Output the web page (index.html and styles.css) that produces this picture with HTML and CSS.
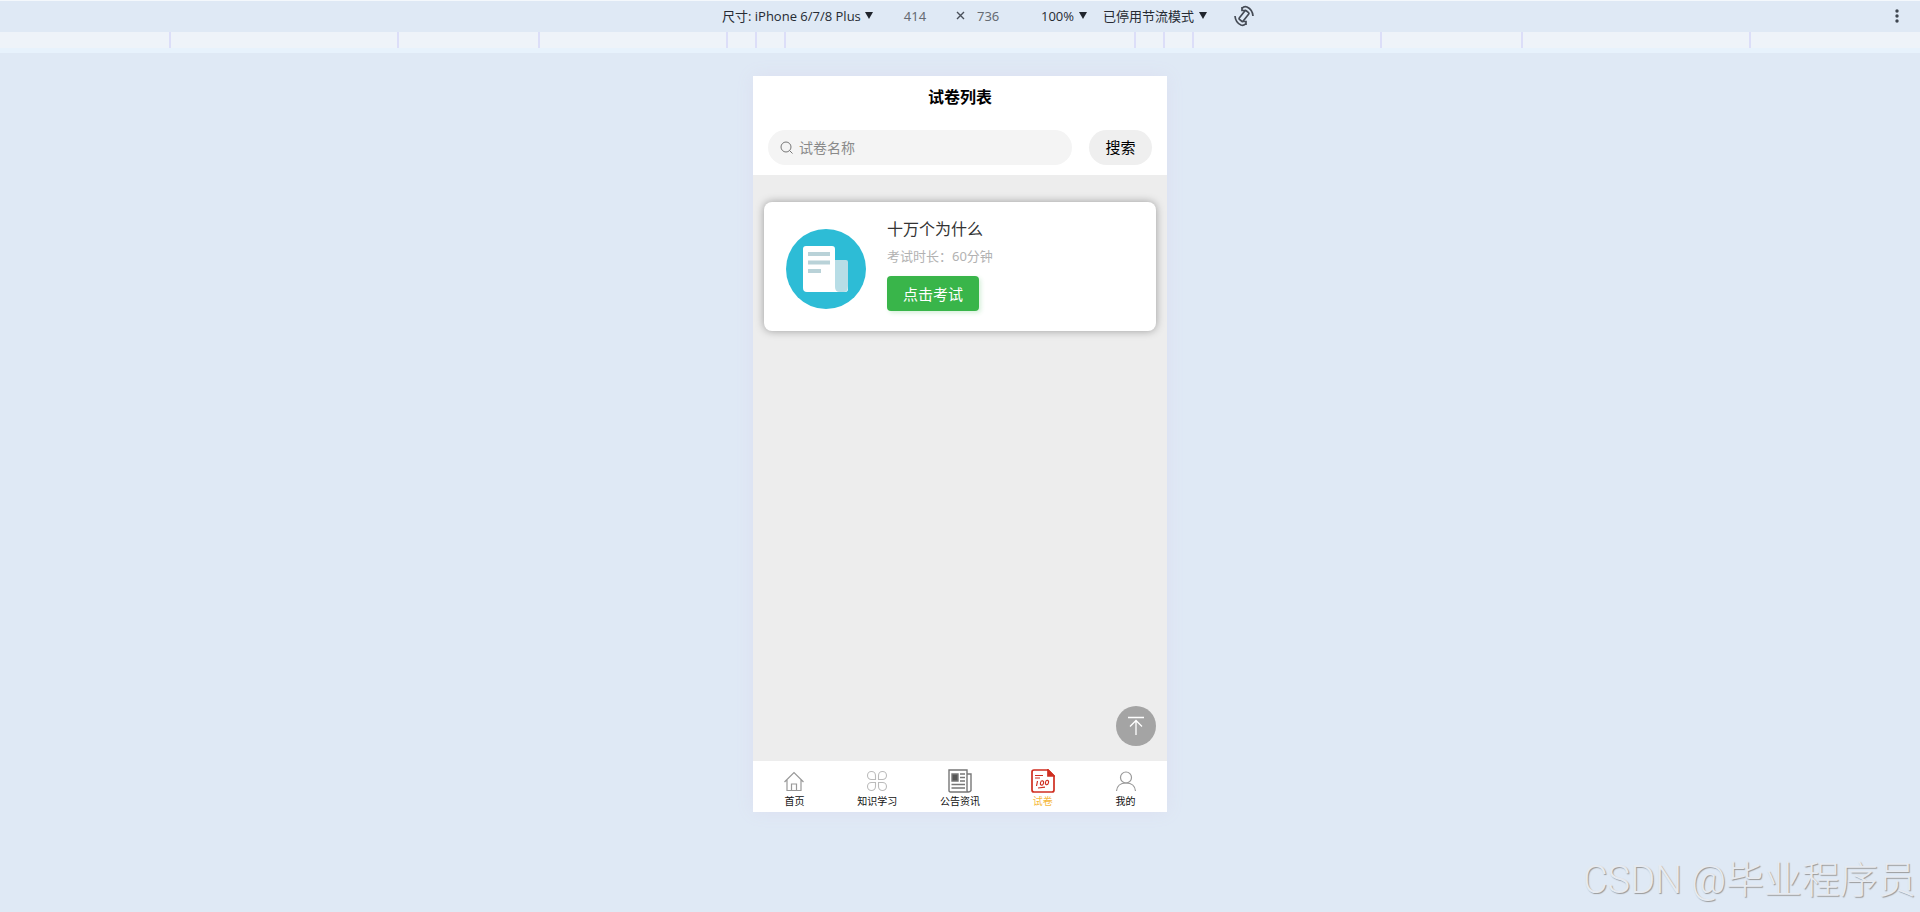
FILE: index.html
```html
<!DOCTYPE html>
<html lang="zh-CN">
<head>
  <meta charset="UTF-8">
  <meta name="viewport" content="width=device-width, initial-scale=1.0">
  <title>试卷列表</title>
  <link rel="stylesheet" href="styles.css">
</head>
<body>

<header class="toolbar">
  <div class="toolbar-left">
    <label class="picker">
      <select aria-label="尺寸"><option>尺寸: iPhone 6/7/8 Plus</option></select>
      <span class="caret"></span>
    </label>
    <input class="size size-width" type="text" value="414" aria-label="宽度">
  </div>
  <span class="times">
    <svg width="9" height="9" viewBox="0 0 9 9"><path d="M1 1l7 7M8 1L1 8" stroke="#4a505a" stroke-width="1.4"/></svg>
  </span>
  <div class="toolbar-right">
    <input class="size size-height" type="text" value="736" aria-label="高度">
    <label class="picker">
      <select aria-label="缩放"><option>100%</option></select>
      <span class="caret"></span>
    </label>
    <label class="picker throttle">
      <select aria-label="节流"><option>已停用节流模式</option></select>
      <span class="caret"></span>
    </label>
    <button class="icon-button" type="button" aria-label="旋转">
      <svg width="20" height="22" viewBox="0 0 20 22" fill="none" stroke="#454b55" stroke-width="1.7">
        <rect x="7.500" y="5.500" width="5" height="11" rx="1" transform="rotate(38 10 11)"/>
        <path d="M8 3.500q2-2.500 5-1.500 5.500 2.500 6 9M12 18.500q-2 2.500-5 1.500-5.500-2.500-6-9M8 2v3.500h3.500M12 20v-3.500H8.500"/>
      </svg>
    </button>
    <button class="icon-button more" type="button" aria-label="更多选项">
      <svg width="4" height="14" viewBox="0 0 4 14" fill="#3f4650"><circle cx="2" cy="2" r="1.700"/><circle cx="2" cy="7" r="1.700"/><circle cx="2" cy="12" r="1.700"/></svg>
    </button>
  </div>
</header>

<!-- breakpoints, widest to narrowest and back -->
<div class="ruler">
  <span class="seg laptop"></span>
  <span class="seg tablet"></span>
  <span class="seg wide"></span>
  <span class="seg medium"></span>
  <span class="seg medium"></span>
  <span class="seg small"></span>
  <span class="seg medium"></span>
  <span class="seg medium"></span>
  <span class="seg wide"></span>
  <span class="seg tablet"></span>
  <span class="seg laptop"></span>
  <span class="seg edge"></span>
</div>

<main class="stage">
  <div class="phone">
    <h1 class="title">试卷列表</h1>

    <form class="search">
      <label class="search-box">
        <svg width="13" height="13" viewBox="0 0 13 13" fill="none" stroke="#777" stroke-width="1"><circle cx="6" cy="6" r="5"/><path d="M9.500 9.500l3 3"/></svg>
        <input type="text" placeholder="试卷名称" aria-label="试卷名称">
      </label>
      <button class="search-button" type="button">搜索</button>
    </form>

    <section class="list">
      <article class="card">
        <svg class="cover" width="80" height="80" viewBox="0 0 80 80">
          <circle cx="40" cy="40" r="40" fill="#2dbcd6"/>
          <path d="M20 17h26q3 0 3 3v37q0 6 6 6H21q-4 0-4-4V20q0-3 3-3z" fill="#fff"/>
          <path d="M49 63h10q3 0 3-3v-8H49z" fill="#fff"/>
          <path d="M49 31h11q2 0 2 2v24q0 6-4 6h-4q-5 0-5-5z" fill="#b7dde6"/>
          <path d="M22 25h22M22 33.500h22M22 42h13" stroke="#b9d2d8" stroke-width="4"/>
        </svg>
        <div class="info">
          <h2 class="name">十万个为什么</h2>
          <p class="duration">考试时长：60分钟</p>
          <button class="start" type="button">点击考试</button>
        </div>
      </article>

      <button class="back-top" type="button" aria-label="返回顶部">
        <svg width="18" height="20" viewBox="0 0 18 20" fill="none" stroke="#fff" stroke-width="1.300"><path d="M1 1.500h16M9 19V5M3 10.500L9 4.500l6 6"/></svg>
      </button>
    </section>

    <nav class="tabs">
      <a class="tab" href="#">
        <svg width="24" height="24" viewBox="0 0 24 24" fill="none" stroke="#999" stroke-width="1.200"><path d="M2.500 13L12 3.500l9.500 9.500M5 11v10.500h14V11M9.500 21.500V15h5v6.500"/></svg>
        首页
      </a>
      <a class="tab" href="#">
        <svg width="24" height="24" viewBox="0 0 24 24" fill="none" stroke="#bbb" stroke-width="1.100"><path d="M10.500 10.500H6.500a4 4 0 1 1 4-4zM13.500 10.500v-4a4 4 0 1 1 4 4zM10.500 13.500v4a4 4 0 1 1-4-4zM13.500 13.500h4a4 4 0 1 1-4 4z"/></svg>
        知识学习
      </a>
      <a class="tab" href="#">
        <svg width="24" height="24" viewBox="0 0 24 24" fill="none" stroke="#777" stroke-width="1.400"><path d="M21 23H2.500q-1.500 0-1.500-1.500V1h18v20.500q0 1.500 1.500 1.500t2.500-1.500V5h-4M12 5h5M12 8.500h5M12 12h5M3.500 15.500H17M3.500 19H17"/><path d="M4 5h6v7H4z" fill="#555"/></svg>
        公告资讯
      </a>
      <a class="tab active" href="#">
        <svg width="24" height="24" viewBox="0 0 24 24" fill="none" stroke="#cf2e20" stroke-width="1.700"><path d="M17 1H3Q1 1 1 3v18q0 2 2 2h18q2 0 2-2V7z"/><path d="M17 1v6h6z" fill="#cf2e20"/><path d="M4 6.500h8M4 9h5M7 19l7-.8M6.500 12l-1 5" stroke-width="1.200"/><ellipse cx="11" cy="14" rx="1.500" ry="2.200" transform="rotate(15 11 14)" stroke-width="1.100"/><ellipse cx="16" cy="13.500" rx="1.500" ry="2.200" transform="rotate(15 16 13.500)" stroke-width="1.100"/></svg>
        试卷
      </a>
      <a class="tab" href="#">
        <svg width="24" height="24" viewBox="0 0 24 24" fill="none" stroke="#999" stroke-width="1.200"><circle cx="12" cy="8.500" r="5.500"/><path d="M2.500 22c.5-5 4-8 9.500-8s9 3 9.500 8"/></svg>
        我的
      </a>
    </nav>
  </div>
</main>

<div class="watermark">CSDN @毕业程序员</div>

</body>
</html>
```
FILE: styles.css
```css
* {
  box-sizing: border-box;
}

body {
  margin: 0;
  min-height: 100vh;
  background-color: #dfe9f5;
  font-family: "Noto Sans", "Noto Sans CJK SC", sans-serif;
  color: #000;
}

button,
input,
select {
  margin: 0;
  padding: 0;
  border: none;
  background: none;
  font-family: inherit;
  color: inherit;
  outline: none;
}

button {
  cursor: pointer;
}

svg {
  display: block;
}

/* toolbar */
.toolbar {
  display: grid;
  grid-template-columns: 1fr 18px 1fr;
  align-items: center;
  height: 32px;
  padding-bottom: 2px;
  border-top: 1px solid #f4f8fc;
  font-size: 13px;
  color: #262b33;
}

.toolbar-left,
.toolbar-right {
  display: flex;
  align-items: center;
}

.toolbar-left {
  justify-content: flex-end;
  gap: 6px;
}

.picker {
  display: flex;
  align-items: center;
  gap: 4px;
}

.picker select {
  appearance: none;
  font-family: "Open Sans", "Noto Sans CJK SC", sans-serif;
  font-size: 13px;
}

.caret {
  border: 4px solid transparent;
  border-top: 7px solid #1f242c;
  border-bottom: none;
}

.size {
  width: 72px;
  font-size: 13px;
  color: #666b73;
}

.size-width {
  text-align: center;
}

.size-height {
  padding-left: 8px;
}

.times {
  display: flex;
  justify-content: center;
}

.throttle {
  margin-left: 16px;
}

.icon-button {
  margin-left: 27px;
}

.more {
  margin-left: auto;
  margin-right: 21px;
}

/* ruler */
.ruler {
  display: flex;
  justify-content: center;
  height: 21px;
  background-color: #eef3f9;
  border-bottom: 5px solid #e7f2fc;
}

.seg {
  flex: none;
  border-left: 2px solid #dcdef8;
}

.small {
  width: 350px;
}

.medium {
  width: 29px;
}

.wide {
  width: 188px;
}

.tablet {
  width: 141px;
}

.laptop {
  width: 228px;
}

.edge {
  width: 2px;
}

/* phone */
.stage {
  display: flex;
  justify-content: center;
  padding: 23px 0;
}

.phone {
  display: flex;
  flex-direction: column;
  width: 414px;
  height: 736px;
  background-color: #ededed;
  box-shadow: 0 0 16px #dcdff0;
}

.title {
  margin: 0;
  padding-bottom: 2px;
  background-color: #fff;
  font-size: 16px;
  line-height: 42px;
  text-align: center;
}

.search {
  display: flex;
  gap: 17px;
  padding: 10px 15px;
  background-color: #fff;
}

.search-box {
  display: flex;
  flex: 1;
  align-items: center;
  gap: 6px;
  height: 35px;
  padding: 0 12px;
  border-radius: 18px;
  background-color: #f4f4f4;
}

.search-box input {
  flex: 1;
  min-width: 0;
  font-size: 14px;
}

.search-box input::placeholder {
  color: #8a8a8a;
}

.search-button {
  width: 63px;
  padding-bottom: 2px;
  border-radius: 18px;
  background-color: #efefef;
  font-size: 15px;
}

.list {
  position: relative;
  flex: 1;
  padding: 27px 11px;
}

.card {
  display: flex;
  align-items: flex-start;
  gap: 21px;
  height: 129px;
  padding: 13px 22px;
  border-radius: 8px;
  background-color: #fff;
  box-shadow: 0 0 8px rgba(0, 0, 0, 0.35);
}

.cover {
  margin-top: 14px;
}

.name {
  margin: 0;
  font-size: 16px;
  font-weight: normal;
  line-height: 28px;
  color: #333;
}

.duration {
  margin: 0 0 7px;
  font-size: 13px;
  line-height: 26px;
  color: #b2b2b2;
}

.start {
  display: block;
  width: 92px;
  height: 35px;
  border-radius: 4px;
  background-color: #39b54a;
  box-shadow: 2px 2px 4px rgba(57, 181, 74, 0.2);
  font-size: 15px;
  color: #fff;
}

.back-top {
  position: absolute;
  right: 11px;
  bottom: 15px;
  display: flex;
  align-items: center;
  justify-content: center;
  width: 40px;
  height: 40px;
  border-radius: 50%;
  background-color: #a4a4a4;
}

.tabs {
  display: flex;
  height: 51px;
  background-color: #fff;
}

.tab {
  display: flex;
  flex: 1;
  flex-direction: column;
  align-items: center;
  gap: 1px;
  padding-top: 8px;
  font-size: 10px;
  line-height: 14px;
  color: #111;
  text-decoration: none;
}

.tab.active {
  color: #f5b83d;
}

.watermark {
  position: absolute;
  right: 4px;
  bottom: 8px;
  font-family: Roboto, "Noto Sans CJK SC", sans-serif;
  font-size: 38px;
  font-weight: 300;
  color: #e6eaf0;
  text-shadow: 1px 1px 1px #999;
}
```
